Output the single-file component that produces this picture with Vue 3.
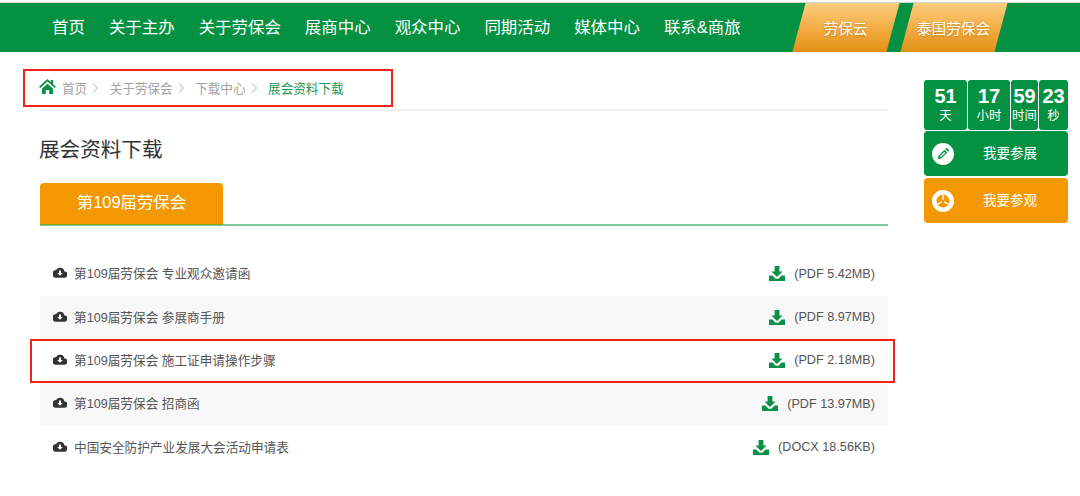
<template>
  <div class="page">
    <header class="topbar">
      <nav class="nav">
        <a v-for="item in navItems" :key="item">{{ item }}</a>
      </nav>
      <div class="slants">
        <a class="slant first">劳保云</a>
        <a class="slant">泰国劳保会</a>
      </div>
    </header>

    <div class="body">
      <main class="content">
        <div class="crumbs">
          <svg class="home" viewBox="0 0 18 16">
            <path d="M9 0 0 8.2l1.3 1.4L9 2.6l7.7 7 1.3-1.4-3-2.7V1h-2.4v2.2z" />
            <path d="M3.2 10.2 9 5l5.8 5.2V16h-4v-4.2H7.2V16h-4z" />
          </svg>
          <template v-for="c in crumbs" :key="c">
            <span class="crumb">{{ c }}</span>
            <svg class="sep" viewBox="0 0 6 10"><path d="M1 .5 5.5 5 1 9.5" /></svg>
          </template>
          <span class="crumb current">展会资料下载</span>
          <i class="mark crumb-mark"></i>
        </div>

        <h1 class="title">展会资料下载</h1>

        <div class="tabs">
          <div class="tab">第109届劳保会</div>
        </div>

        <ul class="files">
          <li v-for="f in files" :key="f.name" class="file">
            <svg class="cloud" viewBox="0 0 16 12">
              <path d="M12.9 4.5A5 5 0 0 0 3.6 3.2 4.4 4.4 0 0 0 4 12h8.4a3.7 3.7 0 0 0 .5-7.5z" />
              <path class="arrow" d="M6.8 3.6h2.4v2.9h2L8 9.8 4.8 6.5h2z" />
            </svg>
            <span class="name">{{ f.name }}</span>
            <svg class="dl" viewBox="0 0 16 15">
              <path d="M5.6 0h4.8v5.4h3.2L8 11 2.4 5.4h3.2z" />
              <path d="M0 9.6h3.4L6.6 12.8h2.8l3.2-3.2H16V15H0z" />
            </svg>
            <span class="size">({{ f.size }})</span>
            <i v-if="f.marked" class="mark row-mark"></i>
          </li>
        </ul>
      </main>

      <aside class="side">
        <div class="timer">
          <div v-for="t in timer" :key="t.unit" class="cell" :style="{ width: t.w + 'px' }">
            <b>{{ t.num }}</b>
            <span>{{ t.unit }}</span>
          </div>
        </div>
        <a class="action green">
          <span class="badge">
            <svg viewBox="0 0 14 14" class="ico-green">
              <path d="M10.2.8 13.2 3.8 11.9 5.1 8.9 2.1z" />
              <path d="M8.1 2.9 11.1 5.9 4.6 12.4 1 13 1.6 9.4zM7.9 5 3 9.9l1.1 1.1L9 6.1z" fill-rule="evenodd" />
            </svg>
          </span>
          <span class="label">我要参展</span>
        </a>
        <a class="action orange">
          <span class="badge">
            <svg viewBox="0 0 14 14" class="ico-orange">
              <circle cx="7" cy="7" r="6.5" />
              <path class="spoke" d="M7 7V1M7 7 1.8 10.2M7 7l5.2 3.2" />
              <circle class="hub" cx="7" cy="7" r="1.5" />
            </svg>
          </span>
          <span class="label">我要参观</span>
        </a>
      </aside>
    </div>
  </div>
</template>

<script setup>
const navItems = ["首页", "关于主办", "关于劳保会", "展商中心", "观众中心", "同期活动", "媒体中心", "联系&商旅"];
const crumbs = ["首页", "关于劳保会", "下载中心"];

const files = [
  { name: "第109届劳保会 专业观众邀请函", size: "PDF 5.42MB" },
  { name: "第109届劳保会 参展商手册", size: "PDF 8.97MB" },
  { name: "第109届劳保会 施工证申请操作步骤", size: "PDF 2.18MB", marked: true },
  { name: "第109届劳保会 招商函", size: "PDF 13.97MB" },
  { name: "中国安全防护产业发展大会活动申请表", size: "DOCX 18.56KB" },
];

const timer = [
  { num: 51, unit: "天", w: 43 },
  { num: 17, unit: "小时", w: 42 },
  { num: 59, unit: "时间", w: 27 },
  { num: 23, unit: "秒", w: 29 },
];
</script>

<style>
html,
body {
  background: #fff;
  overflow: hidden;
}
</style>

<style scoped>
.page {
  width: 1080px;
  height: 496px;
  overflow: hidden;
  font-family: "Liberation Sans", "Noto Sans CJK SC", sans-serif;
}

.topbar {
  height: 49px;
  margin-top: 3px;
  padding-left: 52px;
  background: #059142;
  box-shadow: 0 -1px 0 #cfd8d2;
  display: flex;
  align-items: center;
}

.nav {
  display: flex;
  gap: 24px;
  padding-bottom: 3px;
  font-size: 16.45px;
  color: #fff;
  width: 746.5px;
  flex: none;
}

.slants {
  display: flex;
  gap: 14px;
  height: 100%;
}

.slant {
  position: relative;
  width: 94px;
  display: flex;
  align-items: center;
  justify-content: center;
  font-size: 14.6px;
  color: #fff;
  text-shadow: 0 1px 2px rgba(120, 70, 0, 0.4);
  z-index: 0;
}

.slant::before {
  content: "";
  position: absolute;
  inset: 0;
  z-index: -1;
  background: linear-gradient(#fbcd80, #f2ab40 55%, #e09015);
  transform: skewX(-15deg);
}

.body {
  display: flex;
  padding: 0 12px 0 40px;
}

.content {
  width: 848px;
  flex: none;
}

.crumbs {
  position: relative;
  height: 59px;
  padding-top: 14px;
  box-sizing: border-box;
  border-bottom: 2px solid #f0f0f0;
  display: flex;
  align-items: center;
  font-size: 12.6px;
  color: #a3a3a3;
}

.home {
  width: 17px;
  height: 15px;
  margin: -3px 6px 0 -1px;
  fill: #0a8f46;
}

.sep {
  width: 6px;
  height: 10px;
  margin: 0 11.5px 0 5px;
  fill: none;
  stroke: #aaa;
}

.current {
  color: #1c9a52;
  font-size: 12.6px;
}

.mark {
  position: absolute;
  border: 2px solid #f2231d;
  pointer-events: none;
}

.crumb-mark {
  left: -17px;
  top: 17px;
  width: 366px;
  height: 34px;
}

.title {
  margin: 26px 0 20px -1px;
  font-size: 20.6px;
  line-height: 26px;
  font-weight: 400;
  color: #333;
}

.tabs {
  height: 43px;
  box-sizing: border-box;
  border-bottom: 2px solid #7fc9a0;
}

.tab {
  width: 183px;
  height: 42px;
  background: #f39800;
  border-radius: 4px 4px 0 0;
  color: #fff;
  font-size: 16.4px;
  line-height: 38px;
  text-align: center;
  border-bottom: 1px solid #8aa41e;
  box-sizing: border-box;
}

.files {
  list-style: none;
  margin: 27px 0 0;
  padding: 0;
}

.file {
  position: relative;
  height: 43.3px;
  padding: 0 13px 3.6px;
  box-sizing: border-box;
  display: flex;
  align-items: center;
  font-size: 12.65px;
  color: #555;
}

.file:nth-child(even) {
  background: #f8f8f8;
}

.cloud {
  width: 14px;
  height: 11px;
  margin-right: 7px;
  fill: #333;
}

.arrow {
  fill: #fff;
}

.name {
  flex: 1;
}

.dl {
  width: 16px;
  height: 15px;
  margin: 2px 9.5px 0 0;
  fill: #0a9048;
}

.size {
  margin-top: 2px;
}

.row-mark {
  left: -10px;
  top: -1px;
  width: 861px;
  height: 40px;
}

.side {
  margin-left: 36px;
  padding-top: 28px;
  width: 144px;
  flex: none;
}

.timer {
  display: flex;
  gap: 1px;
  height: 50px;
  margin-bottom: 1px;
}

.cell {
  flex: none;
  background: #059142;
  border-radius: 3px;
  color: #fff;
  text-align: center;
  display: flex;
  flex-direction: column;
  align-items: center;
}

.cell b {
  font-size: 20px;
  line-height: 23px;
  margin-top: 5px;
}

.cell span {
  font-size: 12.4px;
  line-height: 16px;
  white-space: nowrap;
}

.action {
  height: 45px;
  margin-bottom: 2px;
  padding: 0 0 4px 8px;
  border-radius: 4px;
  display: flex;
  align-items: center;
  box-sizing: border-box;
  color: #fff;
  font-size: 13.5px;
}

.green {
  background: #059142;
}

.orange {
  background: #f39800;
}

.badge {
  width: 22px;
  height: 22px;
  margin-top: 4px;
  border-radius: 50%;
  background: #fff;
  display: flex;
  align-items: center;
  justify-content: center;
  flex: none;
}

.ico-green {
  width: 13px;
  height: 13px;
  fill: #059142;
}

.ico-orange {
  width: 14px;
  height: 14px;
  fill: #f39800;
}

.spoke {
  fill: none;
  stroke: #fff;
  stroke-width: 1.4;
}

.hub {
  fill: #f39800;
}

.label {
  margin-left: 29px;
}
</style>
